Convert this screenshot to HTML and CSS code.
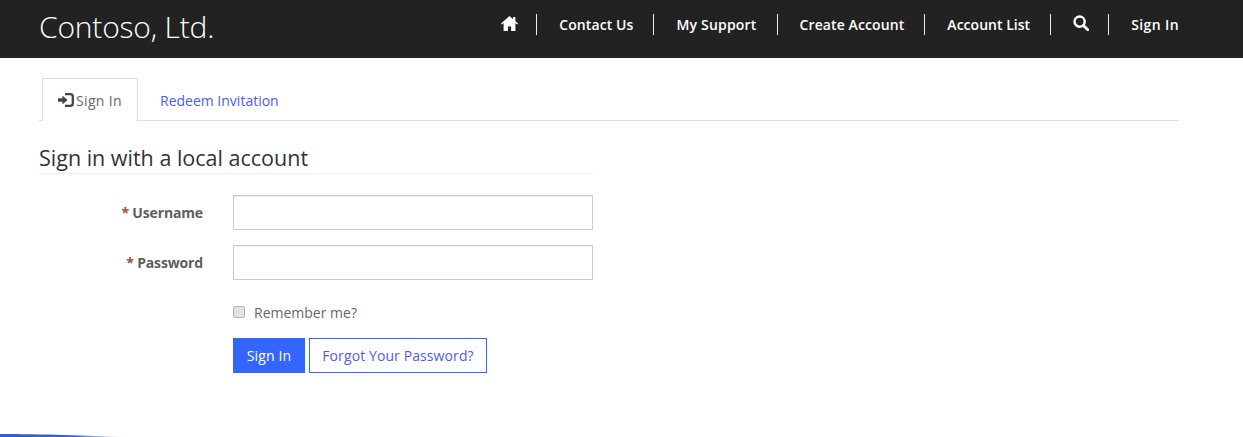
FILE: index.html
```html
<!DOCTYPE html>
<html lang="en">
<head>
<meta charset="utf-8">
<title>Sign In</title>
<link rel="stylesheet" href="styles.css">
</head>
<body>
<header class="topbar">
  <a class="brand" href="#">Contoso, Ltd.</a>
  <nav class="nav">
    <a class="nav-item nav-home" href="#" aria-label="Home"><svg class="nav-icon home" viewBox="0 0 17 15"><path d="M8.5 0 0 7.6l.9 1L2.6 7.1V15h4.3v-4.6h3.2V15h4.3V7.1l1.7 1.5.9-1-2.6-2.3V1h-2.3v2.2z" fill="currentColor"/></svg></a>
    <a class="nav-item nav-contact" href="#">Contact Us</a>
    <a class="nav-item nav-support" href="#">My Support</a>
    <a class="nav-item" href="#">Create Account</a>
    <a class="nav-item nav-list" href="#">Account List</a>
    <a class="nav-item nav-search" href="#" aria-label="Search"><svg class="nav-icon search" viewBox="0 0 16 16"><circle cx="6.6" cy="6.6" r="5.1" fill="none" stroke="currentColor" stroke-width="2.4"/><path d="m10.4 10.4 4.4 4.4" stroke="currentColor" stroke-width="2.8" stroke-linecap="round"/></svg></a>
    <a class="nav-item nav-signin" href="#">Sign In</a>
  </nav>
</header>
<main class="page">
  <ul class="tabs">
    <li class="tab active"><a href="#"><svg class="tab-icon" viewBox="0 0 16 14"><path d="M0 5.3h4.4V2.6L9.6 7 4.4 11.4V8.7H0z" fill="currentColor"/><path d="M7 1.2h5.2c1.7 0 2.6 1 2.6 2.6v6.4c0 1.6-.9 2.6-2.6 2.6H7" fill="none" stroke="currentColor" stroke-width="2.3"/></svg>Sign In</a></li>
    <li class="tab"><a href="#">Redeem Invitation</a></li>
  </ul>
  <form class="login">
    <h2 class="login-title">Sign in with a local account</h2>
    <div class="field">
      <label class="field-label" for="user"><span class="req">*</span> Username</label>
      <input class="field-input" id="user" type="text">
    </div>
    <div class="field">
      <label class="field-label" for="pass"><span class="req">*</span> Password</label>
      <input class="field-input" id="pass" type="password">
    </div>
    <label class="remember"><input class="remember-box" type="checkbox">Remember me?</label>
    <div class="actions">
      <button class="btn primary" type="button">Sign In</button>
      <button class="btn outline" type="button">Forgot Your Password?</button>
    </div>
  </form>
</main>
<svg class="swoosh" viewBox="0 0 124 3" preserveAspectRatio="none">
  <defs><linearGradient id="sw"><stop offset="0" stop-color="#2f5fd6"/><stop offset=".6" stop-color="#3c62c4"/><stop offset="1" stop-color="#3c62c4" stop-opacity="0"/></linearGradient></defs>
  <path d="M0 0C40 0 90 1.5 124 3H0z" fill="url(#sw)"/>
</svg>
</body>
</html>
```
FILE: styles.css
```css
* { box-sizing: border-box; }
html, body { margin: 0; height: 100%; }
body {
  position: relative;
  overflow: hidden;
  background: #fff;
  color: #666;
  font-family: "Open Sans", "Noto Sans", sans-serif;
  font-size: 14px;
}
a { text-decoration: none; color: inherit; }

.topbar {
  height: 58px;
  background: #222;
  display: flex;
  align-items: flex-start;
  justify-content: space-between;
  padding: 0 64px 0 39px;
}
.brand {
  color: #fff;
  font-weight: 300;
  font-size: 30px;
  line-height: 54px;
  letter-spacing: -0.2px;
}
.nav { display: flex; margin-top: 14px; }
.nav-item {
  display: flex;
  align-items: center;
  height: 21px;
  padding: 0 20px 0 22px;
  border-left: 1px solid #eee;
  color: #fff;
  font-weight: 600;
  font-size: 14px;
  letter-spacing: 0.1px;
  white-space: nowrap;
}
.nav-item:first-child { border-left: 0; }
.nav-item:last-child { padding-right: 0; }
.nav-home { padding-right: 18px; }
.nav-contact { letter-spacing: 0.08px; }
.nav-support { letter-spacing: 0.2px; }
.nav-list { letter-spacing: 0.02px; }
.nav-search { padding-right: 19px; }
.nav-signin { letter-spacing: 0.4px; }
.nav-icon { display: block; }
.home { width: 17px; height: 15px; margin-top: -2px; }
.search { width: 16px; height: 16px; margin-top: -4px; }

.page { padding: 20px 64px 0 39px; }
.tabs {
  display: flex;
  list-style: none;
  margin: 0;
  padding: 0 0 0 3px;
  height: 43px;
  border-bottom: 1px solid #ddd;
}
.tab a {
  display: flex;
  align-items: center;
  height: 43px;
  padding: 0 15px;
  color: #4d5cf0;
  border: 1px solid transparent;
  border-bottom: 0;
  white-space: nowrap;
}
.tab { margin-right: 6px; }
.tab.active a {
  background: #fff;
  color: #666;
  border-color: #ddd;
  letter-spacing: 0.35px;
}
.tab-icon { width: 16px; height: 14px; margin-right: 2px; color: #444; }

.login { width: 555px; }
.login-title {
  margin: 23px 0 21px;
  height: 30px;
  border-bottom: 1px solid #eee;
  color: #333;
  font-weight: 400;
  font-size: 21.5px;
  line-height: 27px;
  white-space: nowrap;
}
.field {
  display: grid;
  grid-template-columns: 164px 360px;
  column-gap: 30px;
  align-items: center;
  margin-bottom: 15px;
}
.field-label {
  text-align: right;
  font-weight: 700;
  letter-spacing: -0.15px;
  color: #5e5e5e;
}
.req { color: #a94442; }
.field-input {
  height: 35px;
  width: 360px;
  border: 1px solid #ccc;
  background: #fff;
  box-shadow: inset 0 1px 1px rgba(0,0,0,.075);
}
.remember {
  display: flex;
  align-items: center;
  margin: 22px 0 0 194px;
  height: 20px;
}
.remember-box {
  appearance: none;
  width: 12px;
  height: 12px;
  margin: 0 9px 0 0;
  border: 1px solid #b5b5b5;
  border-radius: 2px;
  background: #e2e2e2;
}
.actions { display: flex; gap: 4px; margin: 16px 0 0 194px; }
.btn {
  height: 35px;
  padding: 0 12px;
  font: inherit;
  white-space: nowrap;
  border: 1px solid #36f;
}
.primary { background: #36f; color: #fff; width: 72px; letter-spacing: 0.15px; }
.outline { background: #fff; color: #4d5cf0; width: 178px; letter-spacing: 0.1px; }

.swoosh {
  position: absolute;
  left: 0;
  bottom: 0;
  width: 124px;
  height: 3px;
}
```
